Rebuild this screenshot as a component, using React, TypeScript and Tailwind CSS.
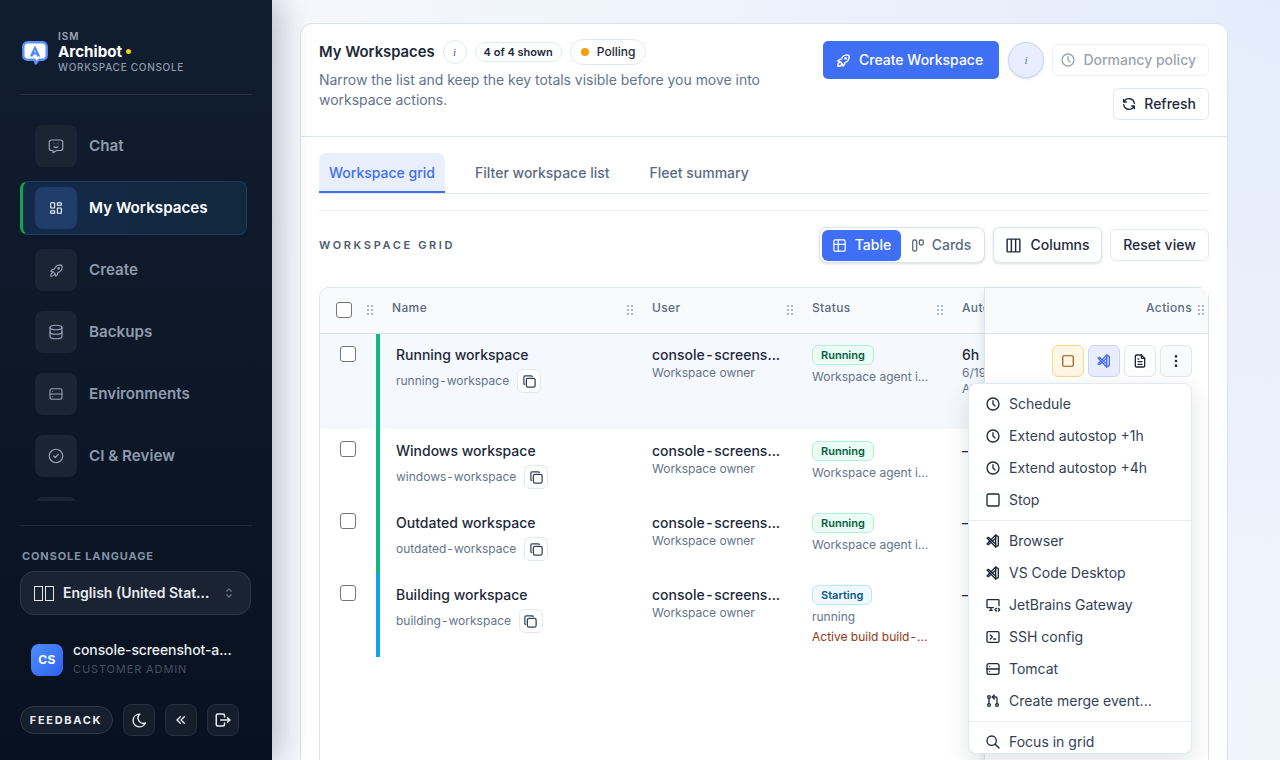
import type { ReactNode } from 'react';
import {
  TbBrandVscode,
  TbChevronsLeft,
  TbCircleCheck,
  TbClock,
  TbColumns3,
  TbCopy,
  TbDatabase,
  TbDeviceDesktopCode,
  TbDotsVertical,
  TbFileText,
  TbGitPullRequest,
  TbLayoutDashboard,
  TbLogout,
  TbMessageChatbot,
  TbMoon,
  TbRefresh,
  TbRocket,
  TbSearch,
  TbSelector,
  TbSquare,
  TbTable,
  TbTerminal2,
} from 'react-icons/tb';

function ServerIcon({ size = 16, strokeWidth = 2, className = '' }: { size?: number; strokeWidth?: number; className?: string }) {
  return (
    <svg width={size} height={size} viewBox="0 0 24 24" fill="none" stroke="currentColor" strokeWidth={strokeWidth} strokeLinecap="round" className={className}>
      <rect x="3" y="4" width="18" height="16" rx="3" />
      <path d="M3 12h18M7 8h.01M7 16h.01" />
    </svg>
  );
}

const NAV_ITEMS = [
  { label: 'Chat', icon: TbMessageChatbot, size: 18 },
  { label: 'My Workspaces', icon: TbLayoutDashboard, size: 16, active: true },
  { label: 'Create', icon: TbRocket, size: 17 },
  { label: 'Backups', icon: TbDatabase, size: 18 },
  { label: 'Environments', icon: ServerIcon, size: 16 },
  { label: 'CI & Review', icon: TbCircleCheck, size: 18 },
  { label: 'Templates', icon: TbFileText, size: 18 },
];

const WORKSPACES = [
  { name: 'Running workspace', slug: 'running-workspace', rowClass: 'h-[95px] bg-[#f5f8fc]', stripe: 'bg-[#10b981]', auto: '6h', cellTop: 'pt-3', badgeTop: 'pt-[11px]' },
  { name: 'Windows workspace', slug: 'windows-workspace', rowClass: 'h-[72px]', stripe: 'bg-[#10b981]', auto: '—', cellTop: 'pt-[13px]', badgeTop: 'pt-3' },
  { name: 'Outdated workspace', slug: 'outdated-workspace', rowClass: 'h-[72px]', stripe: 'bg-[#10b981]', auto: '—', cellTop: 'pt-[13px]', badgeTop: 'pt-3' },
  { name: 'Building workspace', slug: 'building-workspace', rowClass: 'h-[84px]', stripe: 'bg-[#0ea5e9]', auto: '—', cellTop: 'pt-[13px]', badgeTop: 'pt-3', building: true },
];

const MENU_GROUPS = [
  [
    { label: 'Schedule', icon: TbClock },
    { label: 'Extend autostop +1h', icon: TbClock },
    { label: 'Extend autostop +4h', icon: TbClock },
    { label: 'Stop', icon: TbSquare },
  ],
  [
    { label: 'Browser', icon: TbBrandVscode },
    { label: 'VS Code Desktop', icon: TbBrandVscode },
    { label: 'JetBrains Gateway', icon: TbDeviceDesktopCode },
    { label: 'SSH config', icon: TbTerminal2 },
    { label: 'Tomcat', icon: ServerIcon },
    { label: 'Create merge event...', icon: TbGitPullRequest },
  ],
  [{ label: 'Focus in grid', icon: TbSearch }],
];

function Logo() {
  return (
    <svg width="26" height="24" viewBox="0 0 26 24" className="mt-1 shrink-0">
      <path
        d="M5.5 1.3h15a4.2 4.2 0 0 1 4.2 4.2v9a4.2 4.2 0 0 1-4.2 4.2h-3.6l-3.2 3.7-1-3.7H5.5a4.2 4.2 0 0 1-4.2-4.2v-9a4.2 4.2 0 0 1 4.2-4.2z"
        fill="#ffffff"
        stroke="#5a93ff"
        strokeWidth="2.4"
        strokeLinejoin="round"
      />
      <path d="M13 4.5l5.2 11h-3l-.8-2h-2.8l-.8 2h-3z" fill="#4f86ff" />
      <path d="M13 8.8l-.8 2.4h1.6z" fill="#ffffff" />
    </svg>
  );
}

function Grip() {
  return (
    <span className="grid grid-cols-2 gap-[2px]">
      {Array.from({ length: 6 }).map((_, index) => (
        <i className="block h-[2px] w-[2px] rounded-full bg-[#94a3b8]" key={index}></i>
      ))}
    </span>
  );
}

function Checkbox() {
  return <span className="block h-4 w-4 rounded-[3px] border border-[#767676] bg-white"></span>;
}

// the hyphen sits a little wider in the table cells
function Spaced({ text, gap }: { text: string; gap: string }) {
  const at = text.indexOf('-');
  return (
    <>
      {text.slice(0, at)}
      <span className={gap}>-</span>
      {text.slice(at + 1)}
    </>
  );
}

function HeaderCell({ label, className }: { label: string; className: string }) {
  return (
    <div className={`flex shrink-0 items-center justify-between pr-[19px] ${className}`}>
      <span className="mb-[5px] text-xs font-medium tracking-[0.03em] text-[#5b6b80]">{label}</span>
      <Grip />
    </div>
  );
}

function Badge({ tone, children }: { tone: 'green' | 'blue'; children: ReactNode }) {
  const toneClass =
    tone === 'green'
      ? 'border-[#b4f0d4] bg-[#ecfdf5] text-[#065f46]'
      : 'border-[#bae6fd] bg-[#f0f9ff] text-[#075985]';
  return (
    <span className={`flex h-5 w-fit items-center rounded-md border px-2 text-[11px] font-semibold ${toneClass}`}>
      {children}
    </span>
  );
}

function WorkspaceRow({ item }: { item: (typeof WORKSPACES)[number] }) {
  return (
    <div className={`flex ${item.rowClass}`}>
      <div className="w-14 shrink-0 pl-5 pt-[12px]">
        <Checkbox />
      </div>
      <div className={`w-1 shrink-0 ${item.stripe}`}></div>
      <div className={`w-[272px] shrink-0 pl-4 ${item.cellTop}`}>
        <div className="text-sm font-medium leading-[18px] text-[#1e293b]">{item.name}</div>
        <div className="mt-[5px] flex items-center gap-2">
          <span className="text-xs text-[#64748b]">
            <Spaced text={item.slug} gap="mx-px" />
          </span>
          <span className="flex h-6 w-6 items-center justify-center rounded-md border border-[#e2e8f0] bg-white text-[#334155]">
            <TbCopy size={15} />
          </span>
        </div>
      </div>
      <div className={`w-40 shrink-0 ${item.cellTop}`}>
        <div className="text-sm font-medium leading-[18px] text-[#1e293b]">
          <Spaced text="console-screens..." gap="mx-[1.5px]" />
        </div>
        <div className="mt-px text-xs leading-[16px] text-[#64748b]">Workspace owner</div>
      </div>
      <div className={`w-[150px] shrink-0 ${item.badgeTop}`}>
        {item.building ? <Badge tone="blue">Starting</Badge> : <Badge tone="green">Running</Badge>}
        <div className="mt-[3px] text-xs leading-[18px] text-[#64748b]">
          {item.building ? 'running' : 'Workspace agent i...'}
        </div>
        {item.building && (
          <div className="mt-[2px] text-xs leading-[18px] text-[#9a3412]">
            <Spaced text="Active build build-..." gap="mx-px" />
          </div>
        )}
      </div>
      <div className={`shrink-0 ${item.cellTop}`}>
        <div className="text-sm font-medium leading-[18px] text-[#1e293b]">{item.auto}</div>
        {item.auto === '6h' && (
          <div className="mt-px text-xs leading-[16px] text-[#64748b]">
            6/19
            <br />
            At
          </div>
        )}
      </div>
    </div>
  );
}

function ActionMenu() {
  return (
    <div className="absolute right-[16px] top-[95px] z-10 h-[371px] w-[224px] overflow-hidden rounded-lg border border-[#e2e8f0] bg-white shadow-[0_8px_24px_rgba(15,23,42,0.12)]">
      {MENU_GROUPS.map((group, groupIndex) => (
        <div
          className={groupIndex === 0 ? 'pt-1 pb-1' : 'border-t border-[#e8edf4] py-1'}
          key={group[0].label}
        >
          {group.map((item) => (
            <div className="flex h-8 items-center gap-2 pl-4 text-sm text-[#334155]" key={item.label}>
              <item.icon size={16} className="shrink-0 text-[#1e293b]" />
              {item.label}
            </div>
          ))}
        </div>
      ))}
    </div>
  );
}

function WorkspaceTable() {
  return (
    <div className="relative mt-[24px] flex h-[600px] rounded-t-[10px] border border-[#dbe3ee] bg-white">
      <div className="min-w-0 flex-1 overflow-hidden rounded-tl-[10px]">
        <div className="flex h-[46px] w-[800px] items-center border-b border-[#dbe3ee] bg-[#f8fafc] pb-px">
          <div className="flex w-[60px] shrink-0 items-center justify-between pl-4 pr-[7px]">
            <Checkbox />
            <Grip />
          </div>
          <div className="w-3"></div>
          <HeaderCell label="Name" className="w-[260px]" />
          <HeaderCell label="User" className="w-40" />
          <HeaderCell label="Status" className="w-[150px]" />
          <span className="mb-[5px] text-xs font-medium tracking-[0.03em] text-[#5b6b80]">Autostop</span>
        </div>
        <div className="w-[800px]">
          {WORKSPACES.map((item) => (
            <WorkspaceRow item={item} key={item.slug} />
          ))}
        </div>
      </div>
      <div className="w-[224px] shrink-0 border-l border-[#dbe3ee] bg-white shadow-[-6px_0_10px_-6px_rgba(15,23,42,0.12)]">
        <div className="flex h-[46px] items-center justify-end gap-[6px] rounded-tr-[10px] border-b border-[#dbe3ee] bg-[#f8fafc] pb-px pr-1">
          <span className="mb-[5px] text-xs font-medium tracking-[0.03em] text-[#5b6b80]">Actions</span>
          <Grip />
        </div>
        <div className="flex justify-end gap-1 pr-4 pt-[11px]">
          <span className="flex h-8 w-8 items-center justify-center rounded-md border border-[#fcd68a] bg-[#fff7e6] text-[#92500f]">
            <TbSquare size={14} />
          </span>
          <span className="flex h-8 w-8 items-center justify-center rounded-md border border-[#c7d4fb] bg-[#e8edff] text-[#4a6cf7]">
            <TbBrandVscode size={16} />
          </span>
          <span className="flex h-8 w-8 items-center justify-center rounded-md border border-[#e2e8f0] bg-white text-[#1e293b]">
            <TbFileText size={16} />
          </span>
          <span className="flex h-8 w-8 items-center justify-center rounded-md border border-[#e2e8f0] bg-[#f8fafc] text-[#1e293b]">
            <TbDotsVertical size={16} />
          </span>
        </div>
      </div>
      <ActionMenu />
    </div>
  );
}

function Sidebar() {
  return (
    <aside className="z-10 flex h-full w-[272px] shrink-0 flex-col bg-gradient-to-b from-[#111e30] to-[#08111f] px-5 shadow-[6px_0_30px_rgba(15,23,42,0.28)]">
      <div className="flex h-[95px] items-center gap-[10px] border-b border-[#243044] pb-[11px] pl-[2px] pt-[19px]">
        <Logo />
        <div>
          <div className="mb-px text-[10px] font-semibold leading-[12px] tracking-[0.1em] text-[#9aa6b6]">ISM</div>
          <div className="flex items-center gap-1 text-[15.2px] font-bold leading-[18px] text-white">
            Archibot
            <i className="block h-[5px] w-[5px] rounded-full bg-[#facc15]"></i>
          </div>
          <div className="text-[10px] font-medium leading-[12px] tracking-[0.07em] text-[#8d9aab]">WORKSPACE CONSOLE</div>
        </div>
      </div>
      <nav className="flex min-h-0 flex-1 flex-col overflow-hidden pb-[24px] pt-[24px]">
        <div className="flex h-full flex-col gap-2 overflow-hidden">
          {NAV_ITEMS.map((item) => (
            <div
              className={
                item.active
                  ? 'flex h-[54px] w-[227px] shrink-0 items-center gap-3 rounded-lg border border-[#1e3a5f] border-l-[3px] border-l-[#16a34a] bg-gradient-to-r from-[#13294a] to-[#12283c] pl-3 text-[15.2px] font-semibold text-white'
                  : 'flex h-[54px] w-[227px] shrink-0 items-center gap-3 pl-[15px] text-[15.2px] font-semibold text-[#8e9bad]'
              }
              key={item.label}
            >
              <span
                className={
                  item.active
                    ? 'flex h-[42px] w-[42px] items-center justify-center rounded-lg bg-[#203c6a] text-white'
                    : 'flex h-[42px] w-[42px] items-center justify-center rounded-lg bg-[#1a2433] text-[#94a3b8]'
                }
              >
                <item.icon size={item.size} strokeWidth={1.6} />
              </span>
              {item.label}
            </div>
          ))}
        </div>
      </nav>
      <div className="border-t border-[#1f2a3b] pt-[23px]">
        <div className="pl-[2px] text-[11px] font-bold leading-[14px] tracking-[0.08em] text-[#8291a5]">CONSOLE LANGUAGE</div>
        <div className="mr-px mt-2 flex h-[44px] items-center rounded-[14px] border border-[#2d3748] bg-[#1a2332] pl-[13px] pr-[14px]">
          <span className="flex gap-[2px]">
            <i className="block h-[15px] w-[9px] border border-[#e5e7eb]"></i>
            <i className="block h-[15px] w-[9px] border border-[#e5e7eb]"></i>
          </span>
          <span className="ml-[9px] min-w-0 flex-1 truncate text-sm font-semibold text-[#e8edf3]">English (United Stat...</span>
          <TbSelector size={14} className="text-[#64748b]" />
        </div>
        <div className="mt-[26px] flex items-center gap-[10px] pl-[11px]">
          <span className="flex h-8 w-8 items-center justify-center rounded-lg bg-gradient-to-br from-[#4f8cff] to-[#2f62f0] text-xs font-bold tracking-[0.04em] text-white">
            CS
          </span>
          <div className="mb-[3px] min-w-0">
            <div className="text-sm font-medium leading-[18px] tracking-[-0.1px] text-[#e8edf3]">console-screenshot-a...</div>
            <div className="mt-[3px] text-[11px] leading-[14px] tracking-[0.08em] text-[#445064]">CUSTOMER ADMIN</div>
          </div>
        </div>
        <div className="mb-6 mt-[25px] flex items-center gap-[10px]">
          <span className="flex h-7 w-[93px] items-center justify-center rounded-full border border-[#2d3748] bg-[#161f2d] pr-px text-[11px] font-bold tracking-[0.155em] text-[#e8edf3]">
            FEEDBACK
          </span>
          <span className="flex h-8 w-8 items-center justify-center rounded-lg border border-[#252f3f] bg-[#151e2b] text-[#e8edf3]">
            <TbMoon size={17} />
          </span>
          <span className="flex h-8 w-8 items-center justify-center rounded-lg border border-[#252f3f] bg-[#151e2b] text-[#e8edf3]">
            <TbChevronsLeft size={16} />
          </span>
          <span className="flex h-8 w-8 items-center justify-center rounded-lg border border-[#252f3f] bg-[#151e2b] text-[#e8edf3]">
            <TbLogout size={18} />
          </span>
        </div>
      </div>
    </aside>
  );
}

export default function App() {
  return (
    <div className="flex h-screen w-full overflow-hidden bg-[radial-gradient(circle_at_100%_0%,#e4ecfb_0%,#f6f8fc_70%)] font-['Inter',sans-serif]">
      <Sidebar />
      <main className="min-w-0 flex-1 overflow-hidden pl-7 pr-[52px] pt-[23px]">
        <section className="h-[900px] rounded-xl border border-[#dbe3ee] bg-white">
          <header className="flex h-[113px] items-start justify-between border-b border-[#dbe3ee] px-[18px]">
            <div className="w-[460px] pt-[15px]">
              <div className="flex h-[26px] items-center">
                <h1 className="text-[14.8px] font-semibold text-[#1e293b]">My Workspaces</h1>
                <span className="ml-2 flex h-6 w-6 items-center justify-center rounded-full border border-[#e2e8f0] font-['Liberation_Serif',serif] text-[11px] italic text-[#475569]">
                  i
                </span>
                <span className="ml-2 flex h-5 items-center rounded-full border border-[#e2e8f0] px-2 text-[11px] font-semibold text-[#1e293b]">
                  4 of 4 shown
                </span>
                <span className="ml-2 flex h-[26px] items-center gap-2 rounded-full border border-[#e2e8f0] px-[10px] text-xs font-medium text-[#1e293b]">
                  <i className="block h-2 w-2 rounded-full bg-[#f59e0b]"></i>
                  Polling
                </span>
              </div>
              <p className="mt-[5px] text-sm leading-5 tracking-[-0.03px] text-[#64748b]">
                Narrow the list and keep the key totals visible before you move into workspace actions.
              </p>
            </div>
            <div className="flex w-[400px] flex-wrap content-start items-center justify-end gap-x-2 gap-y-[9px] pt-[17px]">
              <span className="flex h-[38px] w-44 items-center gap-[7px] rounded-[5px] bg-[#3f6ff5] pl-3 text-sm font-medium text-white">
                <TbRocket size={17} />
                Create Workspace
              </span>
              <span className="ml-px flex h-9 w-9 items-center justify-center rounded-full border border-[#c7d4fb] bg-[#e8eefd] font-['Liberation_Serif',serif] text-[11px] italic text-[#3f6ff5] shadow-sm">
                i
              </span>
              <span className="flex h-8 w-[157px] items-center justify-end gap-[7px] rounded-md border border-[#eef2f7] bg-white pr-3 text-sm font-medium text-[#9ca3af]">
                <TbClock size={16} />
                Dormancy policy
              </span>
              <span className="flex h-8 w-24 items-center justify-end gap-[7px] rounded-md border border-[#e2e8f0] bg-white pr-3 text-sm font-medium text-[#1e293b]">
                <TbRefresh size={16} />
                Refresh
              </span>
            </div>
          </header>
          <div className="px-[18px]">
            <div className="flex h-[57px] items-end gap-5 border-b border-[#e2e8f0] pt-4">
              <span className="flex h-10 items-center rounded-t-lg border-y-2 border-b-[#3f6ff5] border-t-transparent bg-[#e9effc] px-[10px] text-sm font-medium text-[#3f6ff5]">
                Workspace grid
              </span>
              <span className="flex h-10 items-center px-[10px] text-sm font-medium text-[#5b6b80]">Filter workspace list</span>
              <span className="flex h-10 items-center px-[10px] text-sm font-medium text-[#5b6b80]">Fleet summary</span>
            </div>
            <div className="mt-4 flex items-center justify-between border-t border-[#e8edf4] pt-4">
              <h2 className="text-[11px] font-semibold tracking-[0.24em] text-[#4b5b70]">WORKSPACE GRID</h2>
              <div className="flex items-center gap-2">
                <div className="flex h-9 items-center rounded-lg border border-[#dbe3ee] bg-white p-[2px] shadow-sm">
                  <span className="flex h-[31px] w-[79px] items-center justify-center gap-2 rounded-md bg-[#3f6ff5] text-sm font-medium text-white">
                    <TbTable size={15} />
                    Table
                  </span>
                  <span className="flex h-[31px] w-[81px] items-center justify-center gap-2 text-sm font-medium text-[#5b6b80]">
                    <svg width="12" height="14" viewBox="0 0 12 14" fill="none" stroke="currentColor" strokeWidth="1.3">
                      <rect x="0.7" y="2" width="4" height="11" rx="1.5" />
                      <rect x="7.3" y="2" width="4" height="5" rx="1.5" />
                    </svg>
                    Cards
                  </span>
                </div>
                <span className="flex h-9 w-[109px] items-center justify-center gap-2 rounded-md border border-[#dbe3ee] bg-white text-sm font-medium text-[#1e293b] shadow-sm">
                  <TbColumns3 size={17} />
                  Columns
                </span>
                <span className="flex h-8 w-[99px] items-center justify-center rounded-md border border-[#e2e8f0] bg-white text-sm font-medium text-[#1e293b]">
                  Reset view
                </span>
              </div>
            </div>
            <WorkspaceTable />
          </div>
        </section>
      </main>
    </div>
  );
}
